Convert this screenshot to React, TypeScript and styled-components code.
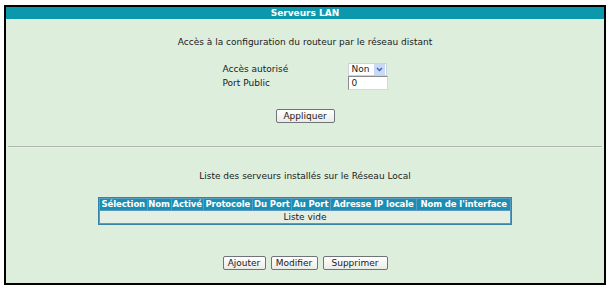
import React from 'react';
import styled, { createGlobalStyle } from 'styled-components';

const GlobalStyle = createGlobalStyle`
  body {
    margin: 0;
    background: #ffffff;
    font-family: "DejaVu Sans", Verdana, sans-serif;
  }
`;

const Frame = styled.div`
  margin: 5px 4px 0 4px;
  width: 598px;
  height: 276px;
  border: 2px solid #000000;
  background: #deeedd;
  display: flex;
  flex-direction: column;
`;

const Header = styled.div`
  height: 12px;
  line-height: 12px;
  background: #0b98ad;
  color: #ffffff;
  font-weight: bold;
  font-size: 9px;
  text-align: center;
`;

const Section = styled.div<{ $height: number }>`
  height: ${p => p.$height}px;
  display: flex;
  flex-direction: column;
  align-items: center;
  font-size: 9px;
  color: #1a1a1a;
`;

const Caption = styled.div<{ $top: number }>`
  margin-top: ${p => p.$top}px;
  line-height: 12px;
`;

const FormGrid = styled.div`
  margin-top: 14px;
  display: grid;
  grid-template-columns: 125px 40px;
  row-gap: 0;
  align-items: center;
`;

const Label = styled.span`
  line-height: 14px;
`;

const SelectBox = styled.div`
  width: 39px;
  height: 13px;
  background: #ffffff;
  border: 1px solid #c9d3dc;
  display: flex;
  align-items: center;
  justify-content: space-between;
  padding-left: 3px;
  box-sizing: border-box;
`;

const Arrow = styled.span`
  width: 11px;
  height: 11px;
  background: #c7d9f5;
  display: flex;
  align-items: center;
  justify-content: center;
  margin-right: 1px;
`;

const TextInput = styled.div`
  width: 40px;
  height: 14px;
  box-sizing: border-box;
  background: #ffffff;
  border: 1px solid #8c8c8c;
  border-right-color: #d8d8d8;
  border-bottom-color: #d8d8d8;
  padding-left: 3px;
  line-height: 12px;
`;

const Button = styled.button<{ $width: number }>`
  width: ${p => p.$width}px;
  height: 14px;
  padding: 0;
  font-family: "DejaVu Sans", Verdana, sans-serif;
  font-size: 9px;
  color: #1a1a1a;
  border: 1px solid #6f7478;
  border-radius: 2px;
  background: linear-gradient(#ffffff, #ebebe6);
  line-height: 12px;
`;

const ButtonRow = styled.div<{ $top: number }>`
  margin-top: ${p => p.$top}px;
  display: flex;
  gap: 5px;
`;

const Separator = styled.div`
  margin: 0 2px;
  height: 1px;
  background: #aeb8ae;
  border-bottom: 1px solid #e8f2e8;
`;

const Table = styled.table`
  margin-top: 15px;
  border-collapse: separate;
  border-spacing: 1px;
  border: 1px solid #3a83a6;
  background: #5a9cc0;
  font-size: 8.5px;
  width: 414px;
`;

const Th = styled.th`
  background: #1a8fb3;
  color: #ffffff;
  font-weight: bold;
  padding: 0;
  height: 11px;
  line-height: 11px;
  white-space: nowrap;
  letter-spacing: -0.1px;
`;

const Td = styled.td`
  background: #e4efe3;
  text-align: center;
  height: 10px;
  line-height: 10px;
  color: #1a1a1a;
  font-size: 9px;
`;

const columns = [
  'Sélection',
  'Nom',
  'Activé',
  'Protocole',
  'Du Port',
  'Au Port',
  'Adresse IP locale',
  "Nom de l'interface",
];

export default function App() {
  return (
    <>
      <GlobalStyle />
      <Frame>
        <Header>Serveurs LAN</Header>
        <Section $height={127}>
          <Caption $top={17}>Accès à la configuration du routeur par le réseau distant</Caption>
          <FormGrid>
            <Label>Accès autorisé</Label>
            <SelectBox>
              <span>Non</span>
              <Arrow>
                <svg width="7" height="5" viewBox="0 0 7 5">
                  <path d="M1 1 L3.5 3.5 L6 1" stroke="#3a64b8" strokeWidth="1.4" fill="none" />
                </svg>
              </Arrow>
            </SelectBox>
            <Label>Port Public</Label>
            <TextInput>0</TextInput>
          </FormGrid>
          <ButtonRow $top={19}>
            <Button $width={59}>Appliquer</Button>
          </ButtonRow>
        </Section>
        <Separator />
        <Section $height={135}>
          <Caption $top={22}>Liste des serveurs installés sur le Réseau Local</Caption>
          <Table>
            <thead>
              <tr>
                {columns.map(c => (
                  <Th key={c}>{c}</Th>
                ))}
              </tr>
            </thead>
            <tbody>
              <tr>
                <Td colSpan={columns.length}>Liste vide</Td>
              </tr>
            </tbody>
          </Table>
          <ButtonRow $top={31}>
            <Button $width={43}>Ajouter</Button>
            <Button $width={47}>Modifier</Button>
            <Button $width={65}>Supprimer</Button>
          </ButtonRow>
        </Section>
      </Frame>
    </>
  );
}
